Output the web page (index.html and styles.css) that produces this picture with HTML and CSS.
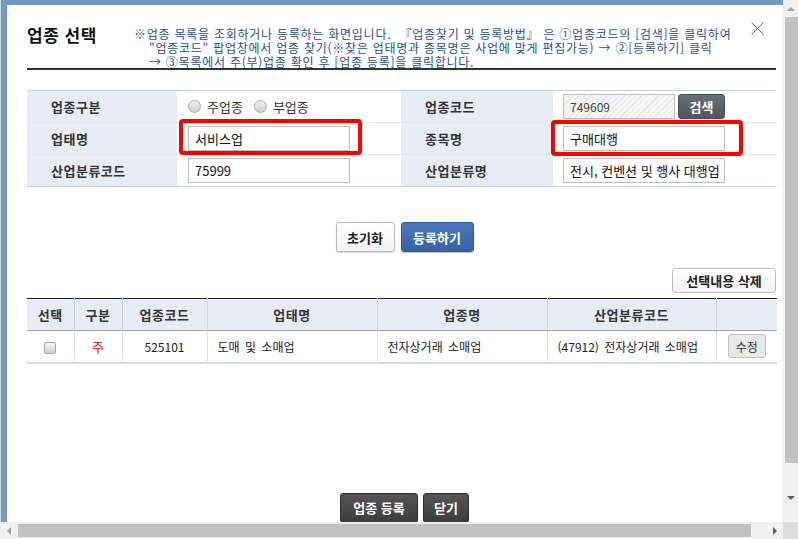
FILE: index.html
```html
<!DOCTYPE html>
<html lang="ko">
<head>
<meta charset="utf-8">
<title>업종 선택</title>
<link rel="stylesheet" href="styles.css">
</head>
<body>
<div class="screen">
  <div class="frame">
    <div class="window">
      <header class="head">
        <h1 class="title">업종 선택</h1>
        <p class="notice"><span class="line">※업종 목록을 조회하거나 등록하는 화면입니다. &nbsp;『업종찾기 및 등록방법』 은 ①업종코드의 [검색]을 클릭하여</span><span class="line sub">"업종코드" 팝업창에서 업종 찾기(※찾은 업태명과 종목명은 사업에 맞게 편집가능) → ②[등록하기] 클릭</span><span class="line sub">→ ③목록에서 주(부)업종 확인 후 [업종 등록]을 클릭합니다.</span></p>
        <button class="close" aria-label="닫기"><svg width="13" height="13" viewBox="0 0 13 13"><path d="M0.5 0.5L12.5 12.5M12.5 0.5L0.5 12.5" stroke="#6b6b6b" stroke-width="1" fill="none"/></svg></button>
      </header>

      <div class="form">
        <div class="lab">업종구분</div>
        <div class="val">
          <label class="radio"><span class="dot"></span>주업종</label>
          <label class="radio"><span class="dot"></span>부업종</label>
        </div>
        <div class="lab">업종코드</div>
        <div class="val">
          <div class="field hatched">749609</div>
          <button class="btn-search">검색</button>
        </div>

        <div class="lab">업태명</div>
        <div class="val">
          <div class="field">서비스업</div>
          <span class="mark mark-a"></span>
        </div>
        <div class="lab">종목명</div>
        <div class="val">
          <div class="field">구매대행</div>
          <span class="mark mark-b"></span>
        </div>

        <div class="lab last">산업분류코드</div>
        <div class="val last"><div class="field">75999</div></div>
        <div class="lab last">산업분류명</div>
        <div class="val last"><div class="field">전시, 컨벤션 및 행사 대행업</div></div>
      </div>

      <div class="actions">
        <button class="btn-white btn-reset">초기화</button>
        <button class="btn-blue">등록하기</button>
      </div>

      <div class="tools">
        <button class="btn-white btn-del">선택내용 삭제</button>
      </div>

      <table class="grid">
        <colgroup>
          <col class="c1"><col class="c2"><col class="c3"><col class="c4"><col class="c5"><col class="c6"><col class="c7">
        </colgroup>
        <thead>
          <tr><th>선택</th><th>구분</th><th>업종코드</th><th>업태명</th><th>업종명</th><th>산업분류코드</th><th></th></tr>
        </thead>
        <tbody>
          <tr>
            <td class="ctr"><span class="check"></span></td>
            <td class="ctr main">주</td>
            <td class="ctr">525101</td>
            <td>도매 및 소매업</td>
            <td>전자상거래 소매업</td>
            <td>(47912) 전자상거래 소매업</td>
            <td class="ctr"><button class="btn-edit">수정</button></td>
          </tr>
        </tbody>
      </table>

      <div class="footer">
        <button class="btn-dark btn-reg">업종 등록</button>
        <button class="btn-dark btn-close">닫기</button>
      </div>
    </div>
  </div>

  <div class="vscroll">
    <span class="arr up"></span>
    <span class="vthumb"></span>
    <span class="arr down"></span>
  </div>
  <div class="hscroll">
    <span class="arr left"></span>
    <span class="hthumb"></span>
    <span class="arr right"></span>
  </div>
  <div class="corner"></div>
</div>
</body>
</html>
```

FILE: styles.css
```css
* { box-sizing: border-box; }
html, body { margin: 0; padding: 0; }
body {
  width: 798px;
  height: 539px;
  overflow: hidden;
  font-family: "Noto Sans CJK KR", "Noto Sans", sans-serif;
  color: #222;
  background: #fff;
}
button { font-family: inherit; cursor: pointer; }

.screen {
  display: grid;
  grid-template-columns: 783px 15px;
  grid-template-rows: 522px 17px;
  width: 798px;
  height: 539px;
}

.frame {
  background: #7597c4;
  padding: 5px 0 0 6px;
  border-left: 1px solid #cfd6e0;
  overflow: hidden;
}
.window {
  background: #fff;
  height: 517px;
  padding: 0 7px 0 20px;
  overflow: hidden;
}

/* header */
.head {
  position: relative;
  display: flex;
  height: 65px;
  padding-top: 19px;
  border-bottom: 2px solid #333;
}
.title {
  margin: 0;
  width: 107px;
  flex: none;
  font-size: 17px;
  font-weight: bold;
  line-height: 22px;
  color: #111;
  letter-spacing: 0.5px;
}
.notice {
  margin: 3px 0 0;
  font-size: 12px;
  color: #1f4e9e;
  white-space: nowrap;
  letter-spacing: 0.75px;
}
.line {
  display: block;
  height: 14px;
  line-height: 14px;
}
.line.sub { padding-left: 15px; }
.close {
  position: absolute;
  right: 12px;
  top: 17px;
  width: 13px;
  height: 13px;
  padding: 0;
  border: 0;
  background: none;
  line-height: 0;
}

/* form */
.form {
  margin-top: 20px;
  display: grid;
  grid-template-columns: 150px 224px 152px 224px;
  border-top: 1px solid #c7d0dd;
}
.lab, .val {
  height: 32px;
  border-bottom: 1px solid #e3e6ea;
  display: flex;
  align-items: center;
}
.lab {
  background: #e8edf5;
  padding-left: 24px;
  font-size: 13px;
  font-weight: bold;
  color: #333;
  letter-spacing: 0.5px;
}
.val {
  position: relative;
  padding-left: 11px;
}
.val:nth-child(4n) { padding-left: 10px; }
.lab.last, .val.last { border-bottom-color: #c7d0dd; }

.radio {
  display: flex;
  align-items: center;
  font-size: 13px;
  color: #333;
  margin-right: 11px;
}
.dot {
  width: 13px;
  height: 13px;
  border-radius: 50%;
  border: 1px solid #a9a9a9;
  background: linear-gradient(#f2f2f2, #cfcfcf);
  margin-right: 6px;
}

.field {
  width: 162px;
  height: 25px;
  border: 1px solid #bcbcbc;
  background: #fff;
  font-size: 13px;
  line-height: 23px;
  padding-left: 6px;
  color: #111;
  white-space: nowrap;
  overflow: hidden;
}
.field.hatched {
  width: 112px;
  font-size: 12px;
  color: #444;
  background: repeating-linear-gradient(135deg, #f6f6f6 0 3px, #e6e6e6 3px 4px);
}
.btn-search {
  margin-left: 3px;
  width: 47px;
  height: 25px;
  border: 1px solid #4a4e55;
  border-radius: 3px;
  background: linear-gradient(#6a6f77, #52565d);
  color: #fff;
  font-size: 13px;
  font-weight: bold;
  padding: 0;
}

.mark {
  position: absolute;
  border: 4px solid #f00;
  border-radius: 4px;
  height: 36px;
}
.mark-a { left: 2px; top: -4px; width: 183px; }
.mark-b { left: -2px; top: -3px; width: 192px; }

/* buttons */
.actions {
  margin-top: 35px;
  display: flex;
  justify-content: center;
  gap: 6px;
  padding-left: 6px;
}
.btn-white {
  height: 30px;
  padding: 0;
  border: 1px solid #b9b9b9;
  border-radius: 3px;
  background: linear-gradient(#fff, #f3f3f3);
  box-shadow: 0 1px 1px rgba(0,0,0,0.15);
  font-size: 13px;
  font-weight: bold;
  color: #222;
}
.btn-reset { width: 59px; }
.btn-blue {
  width: 73px;
  height: 30px;
  padding: 0;
  border: 1px solid #2f5a95;
  border-radius: 3px;
  background: linear-gradient(#4a78b8, #3564a5);
  box-shadow: 0 1px 1px rgba(0,0,0,0.25);
  font-size: 13px;
  font-weight: bold;
  color: #fff;
}

.tools {
  margin-top: 16px;
  display: flex;
  justify-content: flex-end;
}
.btn-del {
  height: 25px;
  width: 104px;
  box-shadow: none;
  border-color: #bdbdbd;
}

/* grid */
.grid {
  margin-top: 5px;
  width: 750px;
  border-collapse: collapse;
  table-layout: fixed;
  font-size: 12px;
}
.c1 { width: 47px; } .c2 { width: 48px; } .c3 { width: 85px; }
.c4 { width: 170px; } .c5 { width: 170px; } .c6 { width: 169px; } .c7 { width: 61px; }
.grid thead tr { border-top: 1px solid #222; border-bottom: 1px solid #9da3ab; }
.grid th {
  height: 32px;
  background: #e8edf5;
  font-size: 13px;
  font-weight: bold;
  color: #333;
  border-left: 1px solid #cfd6e0;
  letter-spacing: 0.5px;
  padding: 0;
}
.grid th:first-child, .grid td:first-child { border-left: 0; }
.grid tbody tr { border-bottom: 2px solid #d6dde7; }
.grid td {
  height: 32px;
  border-left: 1px solid #dde2e8;
  padding: 0 0 0 10px;
  color: #222;
  white-space: nowrap;
  word-spacing: 2px;
}
.grid td.ctr { text-align: center; padding: 0; }
.grid td.main { color: #e00; font-size: 13px; }
.check {
  display: inline-block;
  vertical-align: middle;
  width: 12px;
  height: 12px;
  border: 1px solid #a5a5a5;
  border-radius: 2px;
  background: linear-gradient(#f3f3f3, #d3d3d3);
}
.btn-edit {
  height: 24px;
  width: 38px;
  padding: 0;
  border: 1px solid #c3c3c3;
  border-radius: 3px;
  background: #e9e9e9;
  font-size: 12px;
  color: #333;
  vertical-align: middle;
}

.footer {
  margin-top: 129px;
  display: flex;
  justify-content: center;
  gap: 5px;
  padding-left: 6px;
}
.btn-dark {
  height: 30px;
  padding: 0;
  border: 1px solid #2d2d2d;
  border-radius: 3px;
  background: linear-gradient(#555, #3d3d3d);
  color: #fff;
  font-size: 13px;
  font-weight: bold;
}
.btn-reg { width: 78px; }
.btn-close { width: 46px; }

/* scrollbars */
.vscroll {
  position: relative;
  background: #f0f0f0;
}
.vthumb {
  position: absolute;
  left: 2px;
  right: 0;
  top: 17px;
  height: 446px;
  background: #c1c1c1;
}
.hscroll {
  position: relative;
  background: #f0f0f0;
}
.hthumb {
  position: absolute;
  left: 18px;
  width: 733px;
  top: 2px;
  height: 13px;
  background: #c1c1c1;
}
.corner { background: #dcdcdc; }
.arr {
  position: absolute;
  width: 0;
  height: 0;
}
.arr.up {
  left: 4px; top: 7px;
  border-left: 4px solid transparent;
  border-right: 4px solid transparent;
  border-bottom: 4px solid #a3a3a3;
}
.arr.down {
  left: 4px; top: 496px;
  border-left: 4px solid transparent;
  border-right: 4px solid transparent;
  border-top: 4px solid #606060;
}
.arr.left {
  left: 7px; top: 5px;
  border-top: 4px solid transparent;
  border-bottom: 4px solid transparent;
  border-right: 4px solid #a3a3a3;
}
.arr.right {
  left: 773px; top: 5px;
  border-top: 4px solid transparent;
  border-bottom: 4px solid transparent;
  border-left: 4px solid #606060;
}
```
